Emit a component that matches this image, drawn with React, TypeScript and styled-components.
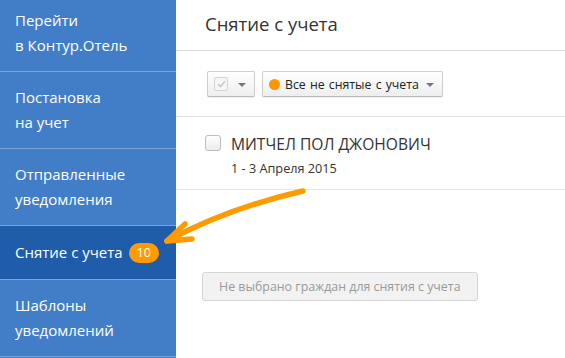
import React from 'react';
import styled, { createGlobalStyle } from 'styled-components';

const GlobalStyle = createGlobalStyle`
    html, body {
        margin: 0;
        padding: 0;
        height: 100%;
        overflow: hidden;
        background: #fff;
        font-family: 'Open Sans', 'Noto Sans', sans-serif;
    }
    #root {
        height: 100%;
    }
`;

const Page = styled.div`
    position: relative;
    display: flex;
    height: 100%;
`;

const Sidebar = styled.nav`
    width: 176px;
    flex-shrink: 0;
    background: #427ec7;
    overflow: hidden;
`;

const SideList = styled.div`
    margin-top: -5px;
`;

const SideItem = styled.div<{ $active?: boolean }>`
    display: flex;
    align-items: center;
    padding: 0 15px;
    min-height: ${(p) => (p.$active ? '54px' : '77px')};
    background: ${(p) => (p.$active ? '#1f5ca9' : 'transparent')};
    border-bottom: 1px solid #7ba4d8;
    color: #fff;
    font-size: 15px;
    line-height: 25px;
    box-sizing: border-box;
`;

const Badge = styled.span`
    display: inline-block;
    margin-left: 6px;
    padding: 0 8px;
    height: 20px;
    line-height: 20px;
    border-radius: 10px;
    background: #ff9a00;
    color: #fff;
    font-size: 12.5px;
`;

const Main = styled.main`
    flex: 1;
    display: flex;
    flex-direction: column;
`;

const Header = styled.div`
    height: 50px;
    border-bottom: 1px solid #dcdcdc;
    padding-left: 29px;
    display: flex;
    align-items: center;
`;

const Title = styled.h1`
    margin: 0 0 3px;
    font-size: 18.5px;
    font-weight: 400;
    color: #333;
`;

const Toolbar = styled.div`
    height: 65px;
    border-bottom: 1px solid #e0e0e0;
    padding-left: 31px;
    display: flex;
    align-items: center;
    gap: 7px;
`;

const DropButton = styled.div`
    display: flex;
    align-items: center;
    height: 26px;
    padding: 0 8px 0 6px;
    box-sizing: border-box;
    border: 1px solid #cfcfcf;
    border-bottom-color: #bdbdbd;
    border-radius: 2px;
    background: linear-gradient(#ffffff, #eeeeee);
    box-shadow: 0 1px 1px rgba(0, 0, 0, 0.08);
    font-size: 12.3px;
    color: #222;
    margin-top: 1px;
`;

const MiniCheck = styled.span`
    width: 14px;
    height: 14px;
    box-sizing: border-box;
    border: 1px solid #d4d4d4;
    border-radius: 2px;
    background: #f6f6f6;
    display: flex;
    align-items: center;
    justify-content: center;
    margin-right: 10px;
`;

const Caret = styled.span`
    width: 0;
    height: 0;
    border-left: 4px solid transparent;
    border-right: 4px solid transparent;
    border-top: 4px solid #777;
    margin-top: 1px;
`;

const Dot = styled.span`
    width: 11px;
    height: 11px;
    border-radius: 50%;
    background: #ff9400;
    margin-right: 5px;
`;

const FilterText = styled.span`
    word-spacing: 1px;
    margin-right: 7px;
`;

const Row = styled.div`
    display: flex;
    gap: 10px;
    padding: 18px 0 0 29px;
    height: 73px;
    box-sizing: border-box;
    border-bottom: 1px solid #e6e6e6;
`;

const RowCheck = styled.span`
    width: 16px;
    height: 16px;
    box-sizing: border-box;
    border: 1px solid #bdbdbd;
    border-radius: 3px;
    background: linear-gradient(#fdfdfd, #ececec);
`;

const RowInfo = styled.div`
    display: flex;
    flex-direction: column;
`;

const Name = styled.div`
    font-size: 15.6px;
    color: #333;
    line-height: 20px;
    margin-top: -1px;
`;

const Dates = styled.div`
    margin-top: 5px;
    font-size: 12.7px;
    color: #333;
`;

const Footer = styled.div`
    padding: 82px 0 0 26px;
`;

const DisabledButton = styled.div`
    display: inline-flex;
    align-items: center;
    height: 29px;
    padding: 0 16px;
    box-sizing: border-box;
    border: 1px solid #d6d6d6;
    border-radius: 3px;
    background: #f2f2f2;
    color: #9a9a9a;
    font-size: 12.4px;
`;

const ArrowLayer = styled.svg`
    position: absolute;
    left: 0;
    top: 0;
    pointer-events: none;
`;

export default function App() {
    return (
        <>
            <GlobalStyle />
            <Page>
                <Sidebar>
                    <SideList>
                        <SideItem>
                            Перейти
                            <br />в Контур.Отель
                        </SideItem>
                        <SideItem>
                            Постановка
                            <br />
                            на учет
                        </SideItem>
                        <SideItem>
                            Отправленные
                            <br />
                            уведомления
                        </SideItem>
                        <SideItem $active>
                            Снятие с учета<Badge>10</Badge>
                        </SideItem>
                        <SideItem>
                            Шаблоны
                            <br />
                            уведомлений
                        </SideItem>
                    </SideList>
                </Sidebar>
                <Main>
                    <Header>
                        <Title>Снятие с учета</Title>
                    </Header>
                    <Toolbar>
                        <DropButton>
                            <MiniCheck>
                                <svg width="9" height="8" viewBox="0 0 9 8">
                                    <path d="M1 4.2 L3.5 6.5 L8 1.2" fill="none" stroke="#c9c9c9" strokeWidth="1.6" />
                                </svg>
                            </MiniCheck>
                            <Caret />
                        </DropButton>
                        <DropButton>
                            <Dot />
                            <FilterText>Все не снятые с учета</FilterText>
                            <Caret />
                        </DropButton>
                    </Toolbar>
                    <Row>
                        <RowCheck />
                        <RowInfo>
                            <Name>МИТЧЕЛ ПОЛ ДЖОНОВИЧ</Name>
                            <Dates>1 - 3 Апреля 2015</Dates>
                        </RowInfo>
                    </Row>
                    <Footer>
                        <DisabledButton>Не выбрано граждан для снятия с учета</DisabledButton>
                    </Footer>
                </Main>
                <ArrowLayer width="565" height="358" viewBox="0 0 565 358">
                    <g fill="none" stroke="#ff9a00" strokeWidth="5.5" strokeLinecap="round" strokeLinejoin="round">
                        <path d="M303 191 Q 228 208 167 241" />
                        <path d="M185 224 L167 241 L192 239" />
                    </g>
                </ArrowLayer>
            </Page>
        </>
    );
}
